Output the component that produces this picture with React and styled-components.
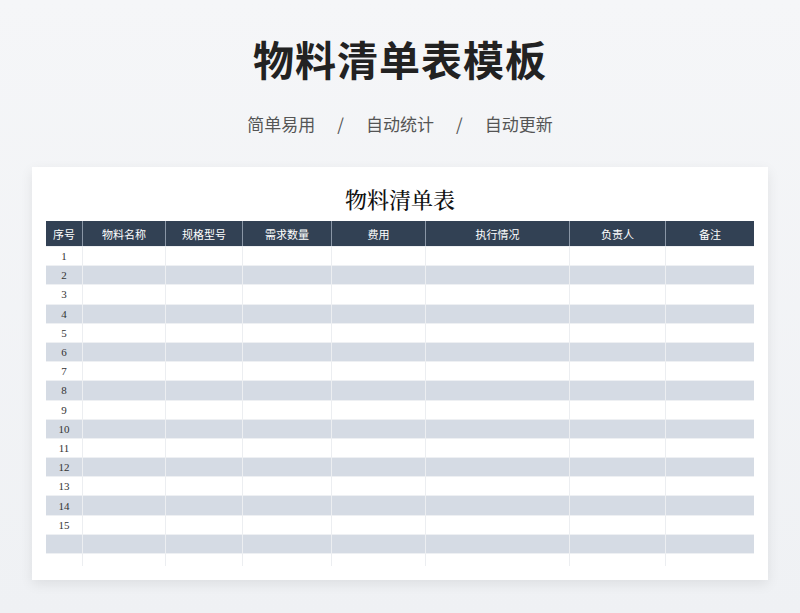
import React from "react";
import styled, { createGlobalStyle } from "styled-components";

const Global = createGlobalStyle`
  html, body { margin: 0; background: #f3f4f6; }
  body { font-family: "Noto Sans CJK SC", "Noto Sans", sans-serif; }
`;

const Page = styled.div`
  width: 800px;
  height: 613px;
  display: flex;
  flex-direction: column;
  align-items: center;
  background: linear-gradient(#f5f6f8, #eff1f4);
`;

const Title = styled.h1`
  margin: 30px 0 0;
  height: 56px;
  font-size: 41px;
  font-weight: 700;
  line-height: 56px;
  color: #222;
  letter-spacing: 1px;
`;

const Subtitle = styled.div`
  margin-top: 26px;
  display: flex;
  gap: 22px;
  font-size: 17px;
  line-height: 24px;
  color: #555;
`;

const Card = styled.div`
  margin-top: 31px;
  width: 736px;
  height: 413px;
  background: #fff;
  box-shadow: 0 4px 12px rgba(0, 0, 0, 0.08);
  display: flex;
  flex-direction: column;
  align-items: center;
`;

const CardTitle = styled.div`
  margin-top: 9px;
  height: 45px;
  font-family: "Noto Serif CJK SC", "Noto Sans CJK SC", serif;
  font-size: 22px;
  font-weight: 500;
  line-height: 45px;
  color: #111;
`;

const Grid = styled.div`
  display: grid;
  grid-template-columns: 36px 83px 77px 89px 94px 144px 96px 89px;
  width: 708px;
`;

const Head = styled.div`
  height: 25px;
  background: #324154;
  color: #fff;
  font-size: 11px;
  display: flex;
  align-items: center;
  justify-content: center;
  border-left: ${(p) => (p.first ? "none" : "1px solid #8a96a6")};
`;

const Cell = styled.div`
  height: ${(p) => (p.short ? "13px" : "19.2px")};
  box-sizing: border-box;
  background: ${(p) => (p.shade ? "#d5dbe4" : "#fff")};
  border-left: ${(p) => (p.first ? "none" : "1px solid #eceef1")};
  border-top: 1px solid #eef0f3;
  font-family: "Liberation Serif", serif;
  font-size: 11px;
  color: #333;
  display: flex;
  align-items: center;
  justify-content: center;
`;

const heads = ["序号", "物料名称", "规格型号", "需求数量", "费用", "执行情况", "负责人", "备注"];

export default function App() {
  const rows = Array.from({ length: 17 }, (_, i) => i);
  return (
    <Page>
      <Global />
      <Title>物料清单表模板</Title>
      <Subtitle>
        <span>简单易用</span><span>/</span><span>自动统计</span><span>/</span><span>自动更新</span>
      </Subtitle>
      <Card>
        <CardTitle>物料清单表</CardTitle>
        <Grid>
          {heads.map((h, i) => (
            <Head key={h} first={i === 0}>{h}</Head>
          ))}
          {rows.map((r) =>
            heads.map((h, c) => (
              <Cell key={r + h} first={c === 0} shade={r % 2 === 1} short={r === 16}>
                {c === 0 && r < 15 ? r + 1 : ""}
              </Cell>
            ))
          )}
        </Grid>
      </Card>
    </Page>
  );
}
